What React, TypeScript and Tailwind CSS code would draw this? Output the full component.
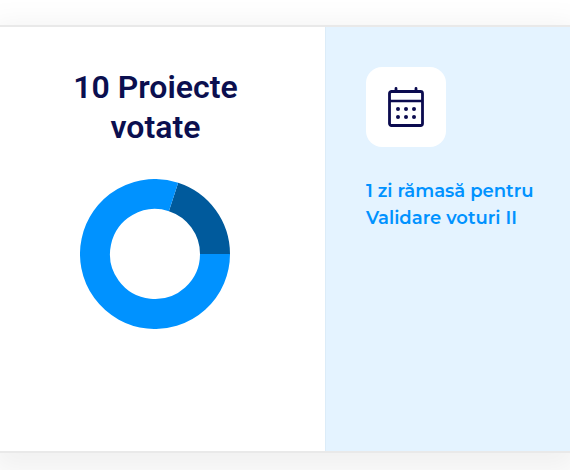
interface Slice {
  label: string;
  value: number;
  color: string;
}

const SLICES: Slice[] = [
  { label: "Votate", value: 2, color: "#005a9c" },
  { label: "Rămase", value: 8, color: "#0092ff" },
];

const RADIUS = 60;
const THICKNESS = 30;

function pointAt(fraction: number) {
  const angle = fraction * Math.PI * 2;
  return `${75 + RADIUS * Math.cos(angle)} ${75 - RADIUS * Math.sin(angle)}`;
}

/** Donut chart, slices run counter-clockwise from three o'clock */
function Donut({ slices }: { slices: Slice[] }) {
  const total = slices.reduce((sum, s) => sum + s.value, 0);
  let start = 0;

  return (
    <svg width="150" height="150" viewBox="0 0 150 150" fill="none" aria-hidden="true">
      {slices.map((slice) => {
        const from = start / total;
        start += slice.value;
        const to = start / total;
        const large = to - from > 0.5 ? 1 : 0;
        return (
          <path
            key={slice.label}
            d={`M${pointAt(from)} A${RADIUS} ${RADIUS} 0 ${large} 0 ${pointAt(to)}`}
            stroke={slice.color}
            strokeWidth={THICKNESS}
          />
        );
      })}
    </svg>
  );
}

function CalendarIcon() {
  return (
    <svg width="40" height="40" viewBox="0 0 40 40" fill="none" aria-hidden="true">
      <rect x="3.5" y="4.5" width="33" height="34" rx="2" stroke="#0b0b4f" strokeWidth="2.8" />
      <path d="M3 14H37" stroke="#0b0b4f" strokeWidth="2.6" />
      <path d="M10 1.4V4M30 1.4V4" stroke="#0b0b4f" strokeWidth="2.8" strokeLinecap="round" />
      {[22, 30].map((cy) =>
        [12, 20, 28].map((cx) => <circle key={`${cx}-${cy}`} cx={cx} cy={cy} r="2" fill="#0b0b4f" />)
      )}
    </svg>
  );
}

export default function App() {
  return (
    <main className="min-h-screen overflow-hidden bg-white pt-[25px]">
      <section className="flex border-y-2 border-[#e9e9e9] bg-white shadow-[0_10px_30px_10px_rgba(0,0,0,0.06)]">
        <div className="flex w-[57%] flex-col items-center gap-8 pt-10 pr-3.5 pb-[122px]">
          <h2 className="max-w-48 text-center font-['Roboto',sans-serif] text-[32px] leading-10 font-semibold text-[#0b0f4f]">
            10 Proiecte votate
          </h2>
          <Donut slices={SLICES} />
        </div>

        <div className="flex-1 border-l border-[#dcecf8] bg-[#e4f3ff] pt-10 pr-4 pl-10">
          <div className="flex size-20 items-center justify-center rounded-2xl bg-white">
            <CalendarIcon />
          </div>
          <p className="mt-[31px] font-['Montserrat','Inter',sans-serif] text-lg leading-[27px] font-semibold text-[#0092ff]">
            1 zi rămasă pentru Validare voturi II
          </p>
        </div>
      </section>
    </main>
  );
}
